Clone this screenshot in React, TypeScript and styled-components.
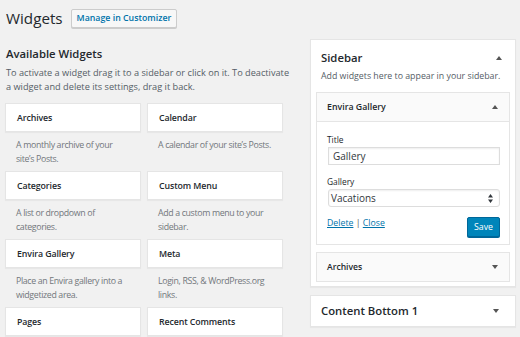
import * as React from 'react'
import styled, { createGlobalStyle } from 'styled-components'

const GlobalStyle = createGlobalStyle`
  html, body {
    margin: 0;
    padding: 0;
    background: #f1f1f1;
  }
  body {
    font-family: 'Open Sans', 'Noto Sans', sans-serif;
    color: #23282d;
  }
`

const Page = styled.div`
  width: 520px;
  height: 337px;
  overflow: hidden;
  padding: 0 4px 0 5px;
  box-sizing: border-box;
`

const Header = styled.div`
  display: flex;
  align-items: center;
  gap: 8px;
  padding-top: 8px;
  height: 20px;
`

const PageTitle = styled.h1`
  margin: 0 0 0 1px;
  font-size: 15.2px;
  font-weight: 400;
  line-height: 20px;
`

const HeaderButton = styled.button`
  height: 19px;
  padding: 0 5px;
  border: 1px solid #ccc;
  border-radius: 2px;
  background: #f7f7f7;
  box-shadow: 0 1px 0 #ccc;
  color: #0073aa;
  font-family: inherit;
  font-size: 8.8px;
  font-weight: 600;
`

const Columns = styled.div`
  display: flex;
  gap: 15px;
  margin-top: 11px;
`

const LeftCol = styled.div`
  flex: 0 0 290px;
`

const RightCol = styled.div`
  flex: 0 0 206px;
`

const SectionTitle = styled.h2`
  margin: 7px 0 0 1px;
  font-size: 11.3px;
  font-weight: 600;
  line-height: 16px;
`

const Intro = styled.p`
  margin: 4px 0 0 1px;
  font-size: 9.2px;
  line-height: 13.5px;
  color: #555d66;
  white-space: nowrap;
`

const WidgetGrid = styled.div`
  display: grid;
  width: 277px;
  grid-template-columns: 136px 136px;
  grid-auto-rows: 68px;
  column-gap: 6px;
  margin-top: 10px;
`

const Widget = styled.div`
  display: flex;
  flex-direction: column;
`

const WidgetCard = styled.div`
  height: 29px;
  box-sizing: border-box;
  display: flex;
  align-items: center;
  padding: 0 11px;
  background: #fff;
  border: 1px solid #e5e5e5;
  box-shadow: 0 1px 1px rgba(0, 0, 0, 0.04);
  font-size: 8.8px;
  font-weight: 600;
  letter-spacing: -0.1px;
`

const WidgetDesc = styled.div`
  padding: 6px 10px 0 11px;
  font-size: 8.8px;
  letter-spacing: -0.35px;
  line-height: 14px;
  color: #72777c;
`

const SidebarBox = styled.div`
  background: #fff;
  border: 1px solid #e5e5e5;
  box-shadow: 0 1px 1px rgba(0, 0, 0, 0.04);
  padding: 0 5px 4px;
`

const SidebarHead = styled.div`
  display: flex;
  align-items: center;
  justify-content: space-between;
  padding: 10px 8px 0 5px;
`

const SidebarTitle = styled.h3`
  margin: 0;
  font-size: 11.3px;
  font-weight: 600;
  line-height: 16px;
`

const SidebarDesc = styled.p`
  margin: 3px 0 0 5px;
  font-size: 8.8px;
  line-height: 15px;
  color: #555d66;
`

const InnerWidget = styled.div`
  margin-top: 8px;
  border: 1px solid #e5e5e5;
  background: #fff;
  & + & {
    margin-top: 7px;
  }
`

const InnerHead = styled.div<{ $open?: boolean }>`
  height: 28px;
  display: flex;
  align-items: center;
  justify-content: space-between;
  padding: 0 11px 0 10px;
  background: #fafafa;
  border-bottom: ${p => (p.$open ? '1px solid #e5e5e5' : 'none')};
  font-size: ${p => (p.$open ? '8.8px' : '8.6px')};
  font-weight: 600;
`

const InnerBody = styled.div`
  padding: 11px 9px 7px 11px;
`

const FieldLabel = styled.label`
  display: block;
  margin-left: -1px;
  font-size: 8.4px;
  line-height: 14px;
  & ~ & {
    margin-top: 10px;
  }
`

const InputBox = styled.div<{ $select?: boolean }>`
  height: 18px;
  box-sizing: border-box;
  display: flex;
  align-items: center;
  justify-content: space-between;
  padding: ${p => (p.$select ? '0 6px 0 2px' : '0 6px 0 4px')};
  border: 1px solid #ddd;
  border-radius: ${p => (p.$select ? '3px' : '0')};
  box-shadow: inset 0 1px 2px rgba(0, 0, 0, 0.07);
  background: #fff;
  font-size: 10px;
  color: #32373c;
`

const Footer = styled.div`
  display: flex;
  justify-content: space-between;
  align-items: flex-start;
  margin-top: 10px;
`

const Links = styled.div`
  font-size: 8.75px;
  line-height: 12px;
  color: #555;
  margin-left: -1px;
`

const Link = styled.a`
  color: #0073aa;
  text-decoration: underline;
`

const SaveButton = styled.button`
  height: 20px;
  padding: 0 6px;
  border: 1px solid #006799;
  border-radius: 2px;
  background: #0085ba;
  box-shadow: 0 1px 0 #006799;
  color: #fff;
  font-family: inherit;
  font-size: 8.8px;
`

const PlainBox = styled.div`
  margin-top: 8px;
  height: 32px;
  box-sizing: border-box;
  display: flex;
  align-items: center;
  justify-content: space-between;
  padding: 0 16px 0 10px;
  background: #fff;
  border: 1px solid #e5e5e5;
  box-shadow: 0 1px 1px rgba(0, 0, 0, 0.04);
`

const Arrow = ({ up }: { up?: boolean }) => (
  <svg width="6" height="4" viewBox="0 0 6 4">
    <path d={up ? 'M0 4 L3 0 L6 4 Z' : 'M0 0 L3 4 L6 0 Z'} fill="#555" />
  </svg>
)

const SelectArrows = () => (
  <svg width="5" height="9" viewBox="0 0 5 9">
    <path d="M0 3.5 L2.5 0 L5 3.5 Z M0 5.5 L2.5 9 L5 5.5 Z" fill="#32373c" />
  </svg>
)

const widgets = [
  { name: 'Archives', desc: 'A monthly archive of your site’s Posts.' },
  { name: 'Calendar', desc: 'A calendar of your site’s Posts.' },
  { name: 'Categories', desc: 'A list or dropdown of categories.' },
  { name: 'Custom Menu', desc: 'Add a custom menu to your sidebar.' },
  { name: 'Envira Gallery', desc: 'Place an Envira gallery into a widgetized area.' },
  { name: 'Meta', desc: 'Login, RSS, & WordPress.org links.' },
  { name: 'Pages', desc: 'A list of your site’s Pages.' },
  { name: 'Recent Comments', desc: 'Your site’s most recent comments.' },
]

const App: React.FC = () => (
  <Page>
    <GlobalStyle />
    <Header>
      <PageTitle>Widgets</PageTitle>
      <HeaderButton>Manage in Customizer</HeaderButton>
    </Header>
    <Columns>
      <LeftCol>
        <SectionTitle>Available Widgets</SectionTitle>
        <Intro>
          To activate a widget drag it to a sidebar or click on it. To deactivate
          <br />a widget and delete its settings, drag it back.
        </Intro>
        <WidgetGrid>
          {widgets.map(w => (
            <Widget key={w.name}>
              <WidgetCard>{w.name}</WidgetCard>
              <WidgetDesc>{w.desc}</WidgetDesc>
            </Widget>
          ))}
        </WidgetGrid>
      </LeftCol>
      <RightCol>
        <SidebarBox>
          <SidebarHead>
            <SidebarTitle>Sidebar</SidebarTitle>
            <Arrow up />
          </SidebarHead>
          <SidebarDesc>Add widgets here to appear in your sidebar.</SidebarDesc>
          <InnerWidget>
            <InnerHead $open>
              <span>Envira Gallery</span>
              <Arrow up />
            </InnerHead>
            <InnerBody>
              <FieldLabel>Title</FieldLabel>
              <InputBox>Gallery</InputBox>
              <FieldLabel>Gallery</FieldLabel>
              <InputBox $select>
                <span>Vacations</span>
                <SelectArrows />
              </InputBox>
              <Footer>
                <Links>
                  <Link>Delete</Link> | <Link>Close</Link>
                </Links>
                <SaveButton>Save</SaveButton>
              </Footer>
            </InnerBody>
          </InnerWidget>
          <InnerWidget>
            <InnerHead>
              <span>Archives</span>
              <Arrow />
            </InnerHead>
          </InnerWidget>
        </SidebarBox>
        <PlainBox>
          <SidebarTitle>Content Bottom 1</SidebarTitle>
          <Arrow />
        </PlainBox>
      </RightCol>
    </Columns>
  </Page>
)

export default App
